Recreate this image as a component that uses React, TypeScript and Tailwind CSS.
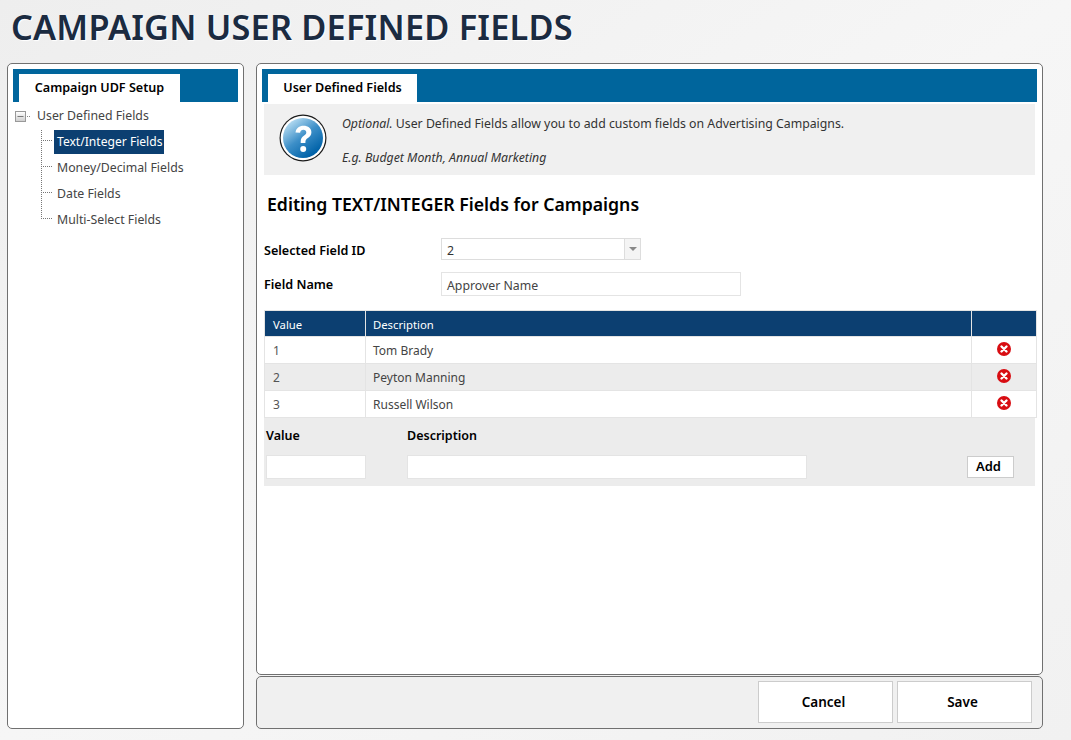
import { Minus } from "lucide-react";

const rows = [
  { value: "1", description: "Tom Brady" },
  { value: "2", description: "Peyton Manning" },
  { value: "3", description: "Russell Wilson" },
];

const treeItems = ["Text/Integer Fields", "Money/Decimal Fields", "Date Fields", "Multi-Select Fields"];

function HelpIcon() {
  return (
    <svg width="48" height="48" viewBox="0 0 48 48">
      <defs>
        <linearGradient id="helpFill" x1="0.15" y1="0.1" x2="0.75" y2="0.9">
          <stop offset="0" stopColor="#b5dcf2" />
          <stop offset="0.5" stopColor="#3d8fc8" />
          <stop offset="1" stopColor="#0062a8" />
        </linearGradient>
      </defs>
      <circle cx="24" cy="24" r="23.5" fill="#1a1a1a" />
      <circle cx="24" cy="24" r="22.3" fill="#ffffff" />
      <circle cx="24" cy="24" r="20" fill="url(#helpFill)" />
      <path
        d="M16.5 18.5c.6-4.4 3.8-6.7 8-6.7 4.6 0 7.9 2.6 7.9 6.5 0 2.9-1.6 4.3-3.5 5.7-1.7 1.2-2.5 2-2.5 3.9v1h-4.7v-1.4c0-3 1.3-4.5 3.1-5.8 1.5-1.1 2.5-1.9 2.5-3.3 0-1.6-1.2-2.6-2.9-2.6-1.9 0-3 1.2-3.3 3z"
        fill="#ffffff"
      />
      <circle cx="24.2" cy="35" r="3" fill="#ffffff" />
    </svg>
  );
}

function DeleteIcon() {
  return (
    <svg width="14" height="14" viewBox="0 0 14 14" className="block">
      <circle cx="7" cy="7" r="7" fill="#d80d12" />
      <path d="M4.5 4.5l5 5M9.5 4.5l-5 5" stroke="#ffffff" strokeWidth="2.4" strokeLinecap="round" />
    </svg>
  );
}

function TabStrip({ label, tabWidth }: { label: string; tabWidth: string }) {
  return (
    <div className="h-[33px] bg-[#00659c] pt-[5px] pl-[6px]">
      <div className={`h-[28px] ${tabWidth} bg-white flex items-center justify-center text-[12.6px] font-semibold text-black`}>
        {label}
      </div>
    </div>
  );
}

export default function App() {
  return (
    <div
      className="w-[1071px] h-[740px] overflow-hidden bg-gradient-to-br from-[#eeeeee] via-[#f6f6f6] to-[#f1f1f1] text-[12.3px] text-[#444444]"
      style={{ fontFamily: '"Noto Sans", "Open Sans", sans-serif' }}
    >
      <h1 className="h-[63px] pl-[11px] pt-[5px] text-[34.3px] leading-[44px] font-semibold text-[#1b2b41] tracking-[0.2px] [text-shadow:1px_1px_1px_#ffffff]">
        CAMPAIGN USER DEFINED FIELDS
      </h1>

      <div className="flex gap-[12px] pl-[7px]">
        {/* Left tree panel */}
        <div className="w-[237px] h-[666px] bg-white border border-[#707070] rounded-[5px] pt-[5px] px-[5px]">
          <TabStrip label="Campaign UDF Setup" tabWidth="w-[161px]" />
          <div className="relative mt-[3px] pl-[2px]">
            <div className="flex items-center h-[22px]">
              <div className="w-[11px] h-[11px] border border-[#999999] bg-gradient-to-b from-white to-[#d0d0d0] flex items-center justify-center">
                <Minus size={9} strokeWidth={2} className="text-[#555555]" />
              </div>
              <div className="w-[3px] h-0 ml-[1px] mr-[7px] border-t border-dotted border-[#888888]" />
              <span>User Defined Fields</span>
            </div>
            <div className="relative mt-[2px] pl-[23px]">
              <div className="absolute left-[26px] top-[1px] h-[89px] border-l border-dotted border-[#777777]" />
              {treeItems.map((item, i) => (
                <div key={item} className="flex items-center h-[26px]">
                  <div className="w-[11px] ml-[3px] mr-[2px] mb-[4px] border-t border-dotted border-[#777777]" />
                  <span
                    className={
                      i === 0
                        ? "h-[24px] w-[110px] whitespace-nowrap flex items-center px-[3px] bg-[#0c3f71] text-[12.1px] text-white"
                        : "px-[3px]"
                    }
                  >
                    {item}
                  </span>
                </div>
              ))}
            </div>
          </div>
        </div>

        {/* Right column */}
        <div className="w-[787px] flex flex-col gap-[1px]">
          <div className="h-[612px] bg-white border border-[#707070] rounded-[5px] pt-[5px] px-[5px]">
            <TabStrip label="User Defined Fields" tabWidth="w-[149px]" />

            <div className="w-[771px] h-[71px] mt-[2px] ml-[2px] bg-[#f0f0f0] flex">
              <div className="pl-[15px] pt-[10px] w-[78px] shrink-0">
                <HelpIcon />
              </div>
              <div className="pt-[11px] leading-[17px] text-[#333333]">
                <p>
                  <em>Optional.</em> User Defined Fields allow you to add custom fields on Advertising Campaigns.
                </p>
                <p className="mt-[17px]">
                  <em>E.g. Budget Month, Annual Marketing</em>
                </p>
              </div>
            </div>

            <h2 className="mt-[17px] ml-[5px] text-[17.66px] leading-[24px] font-semibold text-black">
              Editing TEXT/INTEGER Fields for Campaigns
            </h2>

            <div className="mt-[22px] ml-[2px] flex items-center h-[22px]">
              <label className="w-[177px] pt-[4px] text-[12.6px] font-semibold text-black">Selected Field ID</label>
              <div className="w-[200px] h-[22px] border border-[#dddddd] flex bg-white">
                <span className="flex-1 pl-[5px] pt-[1px] leading-[22px] text-[#333333]">2</span>
                <span className="w-[16px] border-l border-[#dddddd] bg-[#f4f4f4] flex items-center justify-center">
                  <span className="w-0 h-0 border-x-[4px] border-x-transparent border-t-[4px] border-t-[#888888]" />
                </span>
              </div>
            </div>

            <div className="mt-[12px] ml-[2px] flex items-center h-[24px]">
              <label className="w-[177px] pt-[2px] text-[12.6px] font-semibold text-black">Field Name</label>
              <div className="w-[300px] h-[24px] border border-[#e4e4e4] pl-[5px] pt-[1px] leading-[24px] text-[#444444]">
                Approver Name
              </div>
            </div>

            <table className="mt-[14px] ml-[2px] w-[773px] table-fixed border-collapse">
              <thead>
                <tr className="h-[26px] bg-[#0c3f71] text-[11.3px] text-white">
                  <th className="w-[101px] pl-[8px] pt-[4px] text-left font-normal border border-[#e4e4e4] border-b-0">Value</th>
                  <th className="pl-[7px] pt-[4px] text-left font-normal border border-[#e4e4e4] border-b-0">Description</th>
                  <th className="w-[65px] border border-[#e4e4e4] border-b-0" />
                </tr>
              </thead>
              <tbody>
                {rows.map((row, i) => (
                  <tr key={row.value} className={i === 1 ? "h-[27px] bg-[#ececec]" : "h-[27px] bg-white"}>
                    <td className="pl-[8px] pt-[2px] text-[12px] text-[#555555] border border-[#e4e4e4]">{row.value}</td>
                    <td className="pl-[7px] pt-[2px] text-[12px] text-[#444444] border border-[#e4e4e4]">{row.description}</td>
                    <td className="border border-[#e4e4e4]">
                      <div className="flex justify-center mb-[2px]">
                        <DeleteIcon />
                      </div>
                    </td>
                  </tr>
                ))}
              </tbody>
            </table>

            <div className="ml-[2px] w-[771px] h-[68px] bg-[#ececec] flex px-[2px] pt-[9px]">
              <div className="w-[100px]">
                <div className="font-semibold text-black text-[12.5px] leading-[17px]">Value</div>
                <div className="mt-[11px] h-[24px] border border-[#e4e4e4] bg-white" />
              </div>
              <div className="w-[400px] ml-[41px]">
                <div className="font-semibold text-black text-[12.5px] leading-[17px]">Description</div>
                <div className="mt-[11px] h-[24px] border border-[#e4e4e4] bg-white" />
              </div>
              <div className="ml-auto mr-[19px] self-end mb-[8px]">
                <button className="w-[47px] h-[22px] pr-[4px] border border-[#cccccc] bg-white font-semibold text-black text-[13px]">
                  Add
                </button>
              </div>
            </div>
          </div>

          {/* Footer actions */}
          <div className="h-[53px] bg-[#f0f0f0] border border-[#707070] rounded-[5px] flex justify-end gap-[4px] pt-[4px] pr-[10px]">
            <button className="w-[135px] h-[42px] pr-[4px] bg-white border border-[#cccccc] font-semibold text-[13.5px] text-black">Cancel</button>
            <button className="w-[135px] h-[42px] pr-[4px] bg-white border border-[#cccccc] font-semibold text-[13.5px] text-black">Save</button>
          </div>
        </div>
      </div>
    </div>
  );
}
